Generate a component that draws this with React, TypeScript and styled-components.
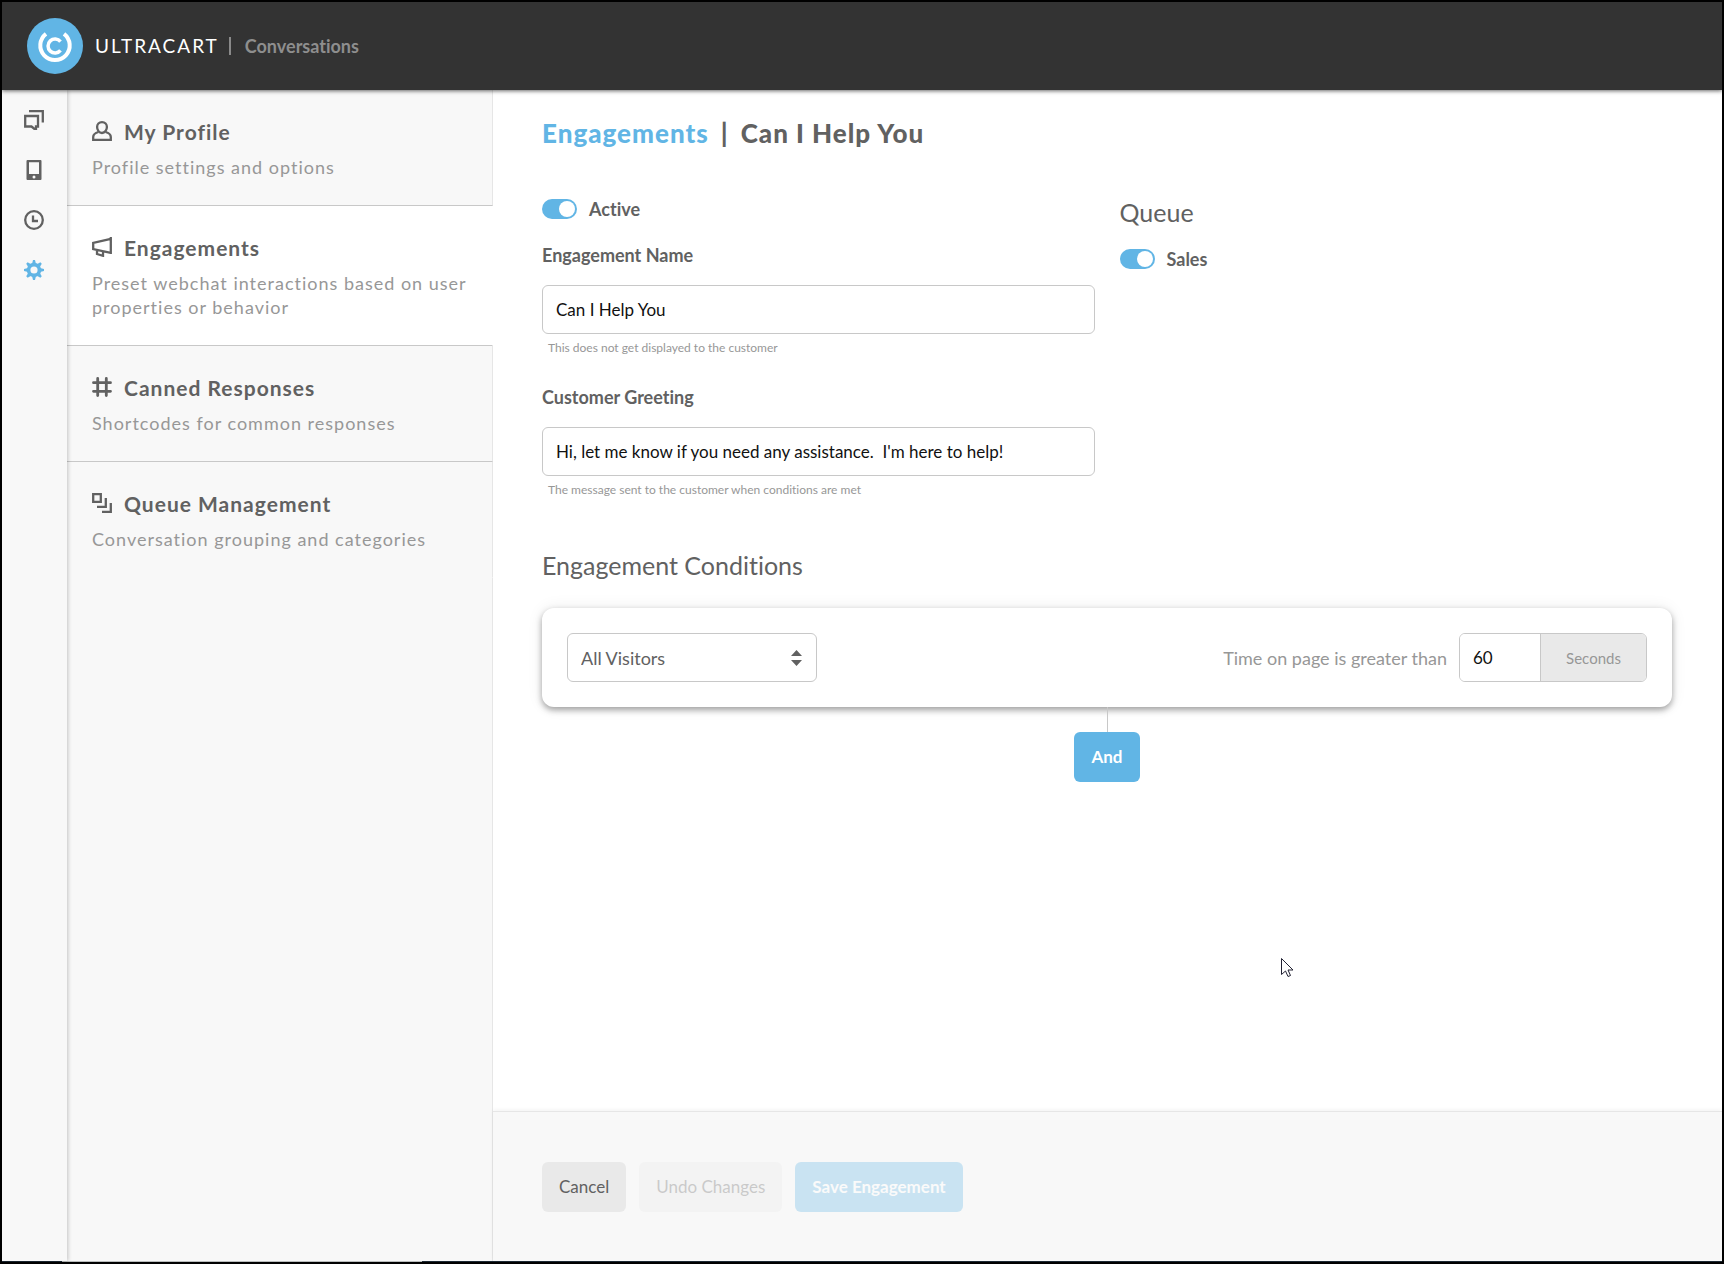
import React, { useState } from "react";
import styled, { createGlobalStyle, css } from "styled-components";

const color = {
  blue: "#61b5e5",
  ink: "#616161",
  muted: "#979797",
  line: "#c8c8c8",
  panel: "#f8f8f8",
  button: "#e9e9e9",
};

const GlobalStyle = createGlobalStyle`
  *, *::before, *::after { box-sizing: border-box; }
  body {
    margin: 0;
    font-family: Lato, "Open Sans", sans-serif;
    font-size: 18px;
    line-height: 22px;
    font-variant-ligatures: none;
    color: ${color.ink};
  }
  h1, h2, h3, p { margin: 0; }
  button, input, select { font: inherit; }
`;

const Frame = styled.div`
  min-height: 100vh;
  display: flex;
  flex-direction: column;
  background: #fff;
  border: 2px solid #000;
`;

const Header = styled.header`
  height: 88px;
  flex: none;
  display: flex;
  align-items: center;
  padding: 0 25px;
  background: #333;
  box-shadow: 0 1px 4px rgba(0, 0, 0, 0.6);
  z-index: 3;
`;

const Brand = styled.a`
  display: flex;
  align-items: center;
  gap: 12px;
  color: #fff;
  font-size: 19px;
  letter-spacing: 2px;
  text-decoration: none;
`;

const HeaderDivider = styled.span`
  width: 2px;
  height: 18px;
  margin: 0 14px 0 10px;
  background: #8a8a8a;
`;

const AppName = styled.span`
  color: #8e8e8e;
  font-weight: 700;
`;

const Body = styled.div`
  flex: 1;
  display: flex;
`;

const Rail = styled.nav`
  width: 65px;
  flex: none;
  display: flex;
  flex-direction: column;
  align-items: center;
  gap: 30px;
  padding: 20px 1px 0 0;
  background: ${color.panel};
  box-shadow: 1px 0 4px rgba(0, 0, 0, 0.22);
  z-index: 2;
`;

const RailLink = styled.a<{ $active?: boolean }>`
  display: block;
  height: 20px;
  color: ${(p) => (p.$active ? color.blue : color.ink)};
`;

const Menu = styled.nav`
  width: 426px;
  flex: none;
  display: flex;
  flex-direction: column;
`;

const MenuItem = styled.a<{ $active?: boolean; $last?: boolean }>`
  display: block;
  padding: 29px 24px 26px 25px;
  color: inherit;
  text-decoration: none;
  letter-spacing: 1px;
  background: ${(p) => (p.$active ? "#fff" : color.panel)};
  border-right: 1px solid ${(p) => (p.$active ? "#fff" : "#e6e6e6")};
  border-bottom: 1px solid ${(p) => (p.$last ? "transparent" : color.line)};
`;

const MenuFill = styled.div`
  flex: 1;
  background: ${color.panel};
  border-right: 1px solid #e6e6e6;
`;

const MenuTitle = styled.span`
  display: flex;
  gap: 12px;
  margin-bottom: 11px;
  font-size: 21px;
  line-height: 25px;
  font-weight: 700;

  svg {
    margin-top: 2px;
  }
`;

const MenuText = styled.span`
  display: block;
  line-height: 24px;
  color: ${color.muted};
`;

const Main = styled.main`
  flex: 1;
  min-width: 0;
  display: flex;
  flex-direction: column;
`;

const Content = styled.section`
  flex: 1;
  padding: 28px 50px 28px 49px;
`;

const PageTitle = styled.h1`
  display: flex;
  gap: 12px;
  margin-bottom: 50px;
  font-size: 26px;
  line-height: 30px;
  font-weight: 900;
  letter-spacing: 1px;

  a {
    color: ${color.blue};
    text-decoration: none;
  }
`;

const Columns = styled.div`
  display: grid;
  grid-template-columns: 1fr 1fr;
  gap: 25px;
`;

const Heading = styled.h2`
  margin-bottom: 22px;
  font-size: 25px;
  line-height: 28px;
  font-weight: 400;
`;

const Toggle = styled.label`
  display: flex;
  align-items: center;
  gap: 12px;
  font-weight: 700;
`;

const Switch = styled.input`
  appearance: none;
  width: 35px;
  height: 20px;
  margin: 1px 0;
  padding: 2px;
  border-radius: 10px;
  background: ${color.line};
  cursor: pointer;

  &::before {
    content: "";
    display: block;
    width: 16px;
    height: 16px;
    border-radius: 50%;
    background: #fff;
  }
  &:checked {
    background: ${color.blue};
  }
  &:checked::before {
    margin-left: auto;
  }
`;

const Field = styled.div`
  display: flex;
  flex-direction: column;
  margin-top: 24px;

  & + & {
    margin-top: 30px;
  }
`;

const FieldLabel = styled.label`
  margin-bottom: 19px;
  font-weight: 700;
`;

const box = css`
  height: 49px;
  border: 1px solid ${color.line};
  border-radius: 6px;
  background: #fff;
  outline: none;
`;

const TextInput = styled.input`
  ${box}
  width: 100%;
  padding: 0 13px;
  color: #111;
  font-size: 17px;
`;

const Hint = styled.p`
  margin: 6px 6px 0;
  font-size: 12px;
  line-height: 16px;
  color: ${color.muted};
`;

const Conditions = styled.section`
  margin-top: 53px;
`;

const Card = styled.div`
  display: flex;
  align-items: center;
  justify-content: space-between;
  margin-top: 29px;
  padding: 25px;
  border-radius: 12px;
  background: #fff;
  box-shadow: 0 3px 6px rgba(0, 0, 0, 0.35), 0 0 16px rgba(0, 0, 0, 0.08);
`;

const SelectWrap = styled.div`
  display: grid;
  grid-template-columns: 250px;
  align-items: center;

  > * {
    grid-area: 1 / 1;
  }
  svg {
    justify-self: end;
    margin-right: 15px;
    pointer-events: none;
  }
`;

const Select = styled.select`
  ${box}
  appearance: none;
  padding: 0 13px;
  color: ${color.ink};
`;

const TimeRule = styled.div`
  display: flex;
  align-items: center;
  gap: 12px;
  color: ${color.muted};
`;

const UnitGroup = styled.div`
  ${box}
  display: flex;
  overflow: hidden;
`;

const UnitInput = styled.input`
  width: 81px;
  padding: 0 13px;
  border: 0;
  border-right: 1px solid ${color.line};
  outline: none;
  color: #111;
  font-size: 17px;
`;

const Unit = styled.span`
  width: 105px;
  display: grid;
  place-items: center;
  background: ${color.button};
  font-size: 15px;
`;

const Join = styled.div`
  display: flex;
  flex-direction: column;
  align-items: center;

  &::before {
    content: "";
    width: 1px;
    height: 25px;
    background: ${color.line};
  }
`;

const Button = styled.button<{ $primary?: boolean }>`
  height: 50px;
  padding: 0 17px;
  border: 0;
  border-radius: 6px;
  background: ${(p) => (p.$primary ? color.blue : color.button)};
  color: ${(p) => (p.$primary ? "#fff" : color.ink)};
  font-size: 17px;
  font-weight: ${(p) => (p.$primary ? 700 : 400)};
  cursor: pointer;

  &:disabled {
    opacity: 0.3;
    cursor: default;
  }
`;

const Actions = styled.footer`
  display: flex;
  gap: 13px;
  padding: 50px 49px 49px;
  background: ${color.panel};
  border-top: 1px solid #e6e6e6;
  box-shadow: 0 -1px 4px rgba(0, 0, 0, 0.06);
`;

const BottomEdge = styled.div`
  height: 1px;
  background: #1c2833;
  padding-left: 60px;

  &::before {
    content: "";
    display: block;
    width: 360px;
    height: 1px;
    background: #b9bcbc;
  }
`;

const Pointer = styled.svg`
  position: absolute;
  left: 1280px;
  top: 957px;
  pointer-events: none;
  z-index: 5;
`;

const Icon = ({ children }: { children: React.ReactNode }) => (
  <svg width="20" height="20" viewBox="0 0 20 20" fill="none" stroke="currentColor" strokeWidth="2.300" aria-hidden="true">
    {children}
  </svg>
);

const ChatIcon = () => (
  <Icon>
    <path d="M5 1.200h13.800v11.300" />
    <path d="M1.200 6H14v10.500h-2v2.500h-1.500L7.500 16.500H1.200z" />
  </Icon>
);

const PhoneIcon = () => (
  <Icon>
    <path
      fill="currentColor"
      stroke="none"
      fillRule="evenodd"
      d="M3.500 0h13a1 1 0 0 1 1 1v18a1 1 0 0 1-1 1h-13a1 1 0 0 1-1-1V1a1 1 0 0 1 1-1zM5 2.300V14h10V2.300zM10 15.500a1.500 1.500 0 1 0 0 3 1.500 1.500 0 0 0 0-3z"
    />
  </Icon>
);

const ClockIcon = () => (
  <Icon>
    <circle cx="10" cy="10" r="8.800" />
    <path d="M9 5.500V11h5" />
  </Icon>
);

const GearIcon = () => (
  <Icon>
    <circle cx="10" cy="10" r="5.400" strokeWidth="3.600" />
    {[0, 45, 90, 135, 180, 225, 270, 315].map((a) => (
      <path key={a} fill="currentColor" stroke="none" d="M8 4L9 0h2l1 4z" transform={`rotate(${a} 10 10)`} />
    ))}
  </Icon>
);

const PersonIcon = () => (
  <Icon>
    <path d="M10 1.200c3 0 4.900 2.200 4.900 4.900S13 12 10 12 5.100 8.900 5.100 6.100 7 1.200 10 1.200z" />
    <path d="M6.500 11C3 12 1.200 13.500 1.200 16v2.800h17.600V16c0-2.500-1.800-4-5.300-5" />
  </Icon>
);

const MegaphoneIcon = () => (
  <Icon>
    <path d="M18.800 0v17M18.800 1.800L1.200 6v6l17.600 3.800M5 13v4l6 1.800v-4.300" />
  </Icon>
);

const HashIcon = () => (
  <Icon>
    <path strokeWidth="2.800" strokeLinecap="round" d="M5.700 1.500v17M14.300 1.500v17M1.500 5.700h17M1.500 14.300h17" />
  </Icon>
);

const QueueIcon = () => (
  <Icon>
    <path d="M1.200 1.200h7.600v7.600H1.200zM13.800 5v8.800H5M18.800 10v8.800H10" />
  </Icon>
);

const Logo = () => (
  <svg width="56" height="56" viewBox="0 0 56 56" fill="none" stroke="#fff" aria-hidden="true">
    <circle cx="28" cy="28" r="28" fill={color.blue} stroke="none" />
    <path strokeWidth="4" d="M19 15.800A14.700 14.700 0 1 0 37 15.800" />
    <path strokeWidth="3.500" d="M33.500 23.600A7 7 0 1 0 33.500 32.400" />
  </svg>
);

const menu = [
  { icon: <PersonIcon />, title: "My Profile", text: "Profile settings and options" },
  {
    icon: <MegaphoneIcon />,
    title: "Engagements",
    text: "Preset webchat interactions based on user properties or behavior",
    active: true,
  },
  { icon: <HashIcon />, title: "Canned Responses", text: "Shortcodes for common responses" },
  { icon: <QueueIcon />, title: "Queue Management", text: "Conversation grouping and categories" },
];

export default function App() {
  const [active, setActive] = useState(true);
  const [sales, setSales] = useState(true);

  return (
    <Frame>
      <GlobalStyle />
      <Header>
        <Brand href="#home">
          <Logo />
          ULTRACART
        </Brand>
        <HeaderDivider />
        <AppName>Conversations</AppName>
      </Header>
      <Body>
        <Rail>
          <RailLink href="#chats" aria-label="Chats"><ChatIcon /></RailLink>
          <RailLink href="#phone" aria-label="Phone"><PhoneIcon /></RailLink>
          <RailLink href="#history" aria-label="History"><ClockIcon /></RailLink>
          <RailLink href="#settings" aria-label="Settings" $active><GearIcon /></RailLink>
        </Rail>
        <Menu>
          {menu.map((m, i) => (
            <MenuItem key={m.title} href="#menu" $active={m.active} $last={i === menu.length - 1}>
              <MenuTitle>
                {m.icon}
                {m.title}
              </MenuTitle>
              <MenuText>{m.text}</MenuText>
            </MenuItem>
          ))}
          <MenuFill />
        </Menu>
        <Main>
          <Content>
            <PageTitle>
              <a href="#engagements">Engagements</a>
              <span>|</span>
              <span>Can I Help You</span>
            </PageTitle>
            <Columns>
              <div>
                <Toggle>
                  <Switch type="checkbox" checked={active} onChange={(e) => setActive(e.target.checked)} />
                  Active
                </Toggle>
                <Field>
                  <FieldLabel htmlFor="name">Engagement Name</FieldLabel>
                  <TextInput id="name" defaultValue="Can I Help You" />
                  <Hint>This does not get displayed to the customer</Hint>
                </Field>
                <Field>
                  <FieldLabel htmlFor="greeting">Customer Greeting</FieldLabel>
                  <TextInput id="greeting" defaultValue="Hi, let me know if you need any assistance.  I'm here to help!" />
                  <Hint>The message sent to the customer when conditions are met</Hint>
                </Field>
              </div>
              <div>
                <Heading>Queue</Heading>
                <Toggle>
                  <Switch type="checkbox" checked={sales} onChange={(e) => setSales(e.target.checked)} />
                  Sales
                </Toggle>
              </div>
            </Columns>
            <Conditions>
              <Heading>Engagement Conditions</Heading>
              <Card>
                <SelectWrap>
                  <Select aria-label="Visitors" defaultValue="all">
                    <option value="all">All Visitors</option>
                  </Select>
                  <svg width="11" height="16" viewBox="0 0 11 16" fill={color.ink} aria-hidden="true">
                    <path d="M5.500 0L11 6H0zM5.500 16L0 10h11z" />
                  </svg>
                </SelectWrap>
                <TimeRule>
                  <label htmlFor="seconds">Time on page is greater than</label>
                  <UnitGroup>
                    <UnitInput id="seconds" defaultValue="60" />
                    <Unit>Seconds</Unit>
                  </UnitGroup>
                </TimeRule>
              </Card>
              <Join>
                <Button type="button" $primary>And</Button>
              </Join>
            </Conditions>
          </Content>
          <Actions>
            <Button type="button">Cancel</Button>
            <Button type="button" disabled>Undo Changes</Button>
            <Button type="button" $primary disabled>Save Engagement</Button>
          </Actions>
        </Main>
      </Body>
      <BottomEdge />
      <Pointer width="14" height="22" viewBox="0 0 14 22" fill="#fff" stroke="#223" strokeWidth="1" aria-hidden="true">
        <path d="M1.500 1.500v16l4-3.500 2.500 5.500 2.500-1-2.500-5.500h5z" />
      </Pointer>
    </Frame>
  );
}
